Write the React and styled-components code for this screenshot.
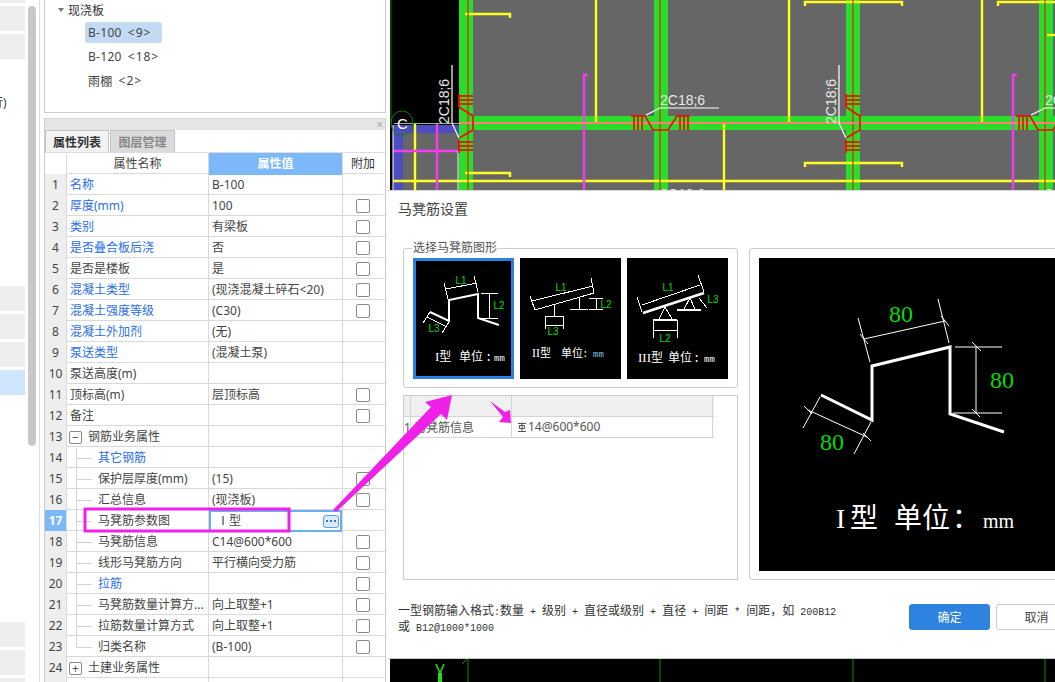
import React from "react";
import styled, { createGlobalStyle } from "styled-components";

const GlobalStyle = createGlobalStyle`
  html, body { margin: 0; padding: 0; background: #fff; }
  body { width: 1055px; height: 682px; overflow: hidden; font-family: "Noto Sans", "Noto Sans CJK SC", sans-serif; }
  * { box-sizing: border-box; }
`;

const Page = styled.div`
  position: relative;
  display: flex;
  width: 1055px;
  height: 682px;
  overflow: hidden;
  background: #fff;
  color: #333;
  font-size: 12px;
`;

/* left rail */
const Rail = styled.div`
  display: flex;
  flex: none;
  width: 40px;
  gap: 3px;
  border-right: 1px solid #ddd;
`;
const RailItems = styled.div`
  display: flex;
  flex-direction: column;
  width: 25px;
  margin-top: -22px;
  overflow: hidden;
`;
const RailItem = styled.div`
  flex: none;
  height: 25px;
  margin-bottom: 3px;
  background: ${(p) => (p.$active ? "#d0e6ff" : "#eeeeee")};
`;
const RailGap = styled.div`
  flex: none;
  height: ${(p) => p.$h}px;
  margin-top: -3px;
`;
const RailLabel = styled.div`
  margin: 37px 0 0 -9px;
  color: #444;
  font-size: 12px;
  line-height: 14px;
  white-space: nowrap;
`;
const RailScroll = styled.div`
  flex: none;
  width: 8px;
  height: 440px;
  margin-top: 6px;
  border-radius: 4px;
  background: #c8c8c8;
`;

/* middle column */
const Side = styled.div`
  display: flex;
  flex-direction: column;
  flex: none;
  width: 342px;
  margin-left: 4px;
`;
const TreePanel = styled.div`
  flex: none;
  height: 114px;
  padding: 0 0 0 13px;
  margin-top: -1px;
  border: 1px solid #ccc;
`;
const TreeHead = styled.div`
  display: flex;
  align-items: center;
  gap: 4px;
  height: 20px;
  font-size: 12px;
`;
const Caret = styled.span`
  width: 0;
  height: 0;
  border-left: 3px solid transparent;
  border-right: 3px solid transparent;
  border-top: 4px solid #777;
`;
const TreeList = styled.div`
  display: flex;
  flex-direction: column;
  gap: 3px;
  margin: 2px 0 0 27px;
`;
const TreeItem = styled.div`
  display: flex;
  align-items: center;
  gap: 6px;
  width: 77px;
  height: 21px;
  padding-left: 3px;
  border-radius: 3px;
  background: ${(p) => (p.$selected ? "#c3daf2" : "transparent")};
  font-size: 12px;
  letter-spacing: 0.3px;
  color: #444;
  white-space: nowrap;
`;
const Count = styled.span`
  letter-spacing: 1px;
`;
const PropPanel = styled.div`
  display: flex;
  flex-direction: column;
  flex: 1;
  min-height: 0;
  margin-top: 5px;
  border-right: 1px solid #ccc;
  border-left: 1px solid #ccc;
`;
const PanelBar = styled.div`
  display: flex;
  align-items: center;
  justify-content: flex-end;
  flex: none;
  height: 12px;
  padding-right: 2px;
  background: #e6e6e6;
  border-top: 1px solid #d4d4d4;
  color: #a8a8a8;
  font-size: 12px;
  line-height: 12px;
`;
const Tabs = styled.div`
  display: flex;
  flex: none;
  gap: 1px;
  height: 23px;
  border-bottom: 1px solid #ddd;
`;
const Tab = styled.div`
  display: flex;
  align-items: center;
  justify-content: center;
  width: ${(p) => (p.$active ? "64px" : "65px")};
  background: ${(p) => (p.$active ? "#f2f2f2" : "#dcdcdc")};
  border: 1px solid #c4c4c4;
  border-bottom: none;
  color: ${(p) => (p.$active ? "#333" : "#888")};
  font-size: 12px;
  font-weight: 700;
`;
const Row = styled.div`
  display: grid;
  grid-template-columns: 22px 142px 134px 41px;
  flex: none;
  height: 21px;
  border-bottom: 1px solid #d9d9d9;
  line-height: 22px;
`;
const NumCell = styled.div`
  text-align: center;
  font-size: 12px;
  border-right: 1px solid #d9d9d9;
  background: ${(p) => (p.$active ? "#7db9f8" : p.$blank ? "#fff" : "#eeeeee")};
  color: ${(p) => (p.$active ? "#fff" : "#444")};
  font-weight: ${(p) => (p.$active ? 700 : 400)};
`;
const NameCell = styled.div`
  display: flex;
  align-items: center;
  justify-content: ${(p) => (p.$center ? "center" : "flex-start")};
  padding-left: ${(p) => (p.$center ? 0 : 3)}px;
  border-right: 1px solid #d9d9d9;
  color: ${(p) => (p.$blue ? "#2a6ee8" : "#444")};
  white-space: nowrap;
  overflow: hidden;
`;
const ValueCell = styled.div`
  display: flex;
  align-items: center;
  justify-content: space-between;
  padding: 0 3px 0 3px;
  border-right: 1px solid #d9d9d9;
  white-space: nowrap;
  color: #444;
  ${(p) => p.$head && "justify-content: center; background: #7db9f8; color: #fff; font-weight: 700;"}
  ${(p) => p.$editing && "box-shadow: inset 0 0 0 2px #6ab0f0; padding-left: 8px;"}
`;
const AddCell = styled.div`
  display: flex;
  align-items: center;
  justify-content: center;
  padding-right: 1px;
`;
const Check = styled.span`
  display: block;
  width: 14px;
  height: 14px;
  border: 1px solid #8a8a8a;
  border-radius: 2px;
  background: #fff;
`;
const ToggleBox = styled.span`
  display: flex;
  align-items: center;
  justify-content: center;
  flex: none;
  width: 13px;
  height: 13px;
  margin: 0 6px 0 -1px;
  border: 1px solid #888;
  border-radius: 2px;
  color: #555;
  font-size: 12px;
  line-height: 11px;
`;
const Branch = styled.span`
  position: relative;
  flex: none;
  width: 22px;
  height: 21px;
  margin-left: 6px;
  &::before {
    content: "";
    position: absolute;
    left: 0;
    top: 0;
    width: 1px;
    height: ${(p) => (p.$last ? "10px" : "21px")};
    background: #d4d4d4;
  }
  &::after {
    content: "";
    position: absolute;
    left: 0;
    top: 10px;
    width: 16px;
    height: 1px;
    background: #d4d4d4;
  }
`;
const MoreButton = styled.span`
  display: flex;
  align-items: center;
  justify-content: center;
  gap: 2px;
  width: 16px;
  height: 13px;
  border: 1px solid #5aa0e8;
  border-radius: 3px;
  background: #dceafb;
  i {
    width: 2px;
    height: 2px;
    background: #2a78d8;
  }
`;

/* canvas */
const CadArea = styled.svg`
  display: block;
  flex: none;
  margin-left: 4px;
  width: 665px;
  height: 682px;
  background: #000;
`;

/* dialog */
const Dialog = styled.div`
  position: absolute;
  left: 388px;
  top: 190px;
  display: flex;
  flex-direction: column;
  width: 700px;
  height: 469px;
  padding: 10px 10px 0 10px;
  background: #fff;
  border-bottom: 1px solid #ccc;
  border-top: 1px solid #ddd;
`;
const DialogTitle = styled.div`
  height: 47px;
  color: #444;
  font-size: 14px;
  line-height: 16px;
`;
const DialogBody = styled.div`
  display: flex;
  gap: 11px;
  height: 332px;
  margin-left: 5px;
`;
const LeftPane = styled.div`
  display: flex;
  flex-direction: column;
  gap: 7px;
  width: 335px;
`;
const GroupBox = styled.div`
  position: relative;
  height: 140px;
  padding: 9px 9px 0 9px;
  border: 1px solid #ccc;
  border-radius: 3px;
  display: flex;
  gap: 6px;
`;
const Legend = styled.span`
  position: absolute;
  left: 8px;
  top: -8px;
  padding: 0 1px;
  background: #fff;
  color: #555;
  font-size: 12px;
  line-height: 14px;
`;
const Thumb = styled.svg`
  display: block;
  width: 101px;
  height: 121px;
  background: #000;
  outline: ${(p) => (p.$active ? "3px solid #2d7fe0" : "none")};
  outline-offset: -3px;
`;
const InfoTable = styled.div`
  flex: 1;
  border: 1px solid #ccc;
`;
const InfoRow = styled.div`
  display: grid;
  grid-template-columns: 7px 101px 201px;
  width: 310px;
  height: 21px;
  border-bottom: 1px solid #d4d4d4;
  background: ${(p) => (p.$head ? "#f0f0f0" : "#fff")};
  line-height: 22px;
  color: #555;
`;
const InfoCell = styled.div`
  padding-left: ${(p) => p.$pad || 0}px;
  border-right: 1px solid #d4d4d4;
  white-space: nowrap;
  overflow: hidden;
`;
const RebarValue = styled(InfoCell)`
  display: flex;
  align-items: center;
  gap: 1px;
  padding-left: 5px;
`;
const PreviewBox = styled.div`
  flex: none;
  width: 329px;
  padding: 9px;
  border: 1px solid #ccc;
  border-radius: 3px;
`;
const Preview = styled.svg`
  display: block;
  width: 309px;
  height: 313px;
  background: #000;
`;
const Footer = styled.div`
  display: flex;
  align-items: flex-start;
  justify-content: space-between;
  margin-top: 24px;
`;
const Hint = styled.div`
  width: 445px;
  color: #333;
  font-family: "Liberation Mono", "Noto Sans CJK SC", monospace;
  font-size: 10px;
  line-height: 14px;
`;
const Cn = styled.span`
  font-family: "Noto Sans CJK SC", sans-serif;
  font-size: 12px;
  line-height: 1;
`;
const Buttons = styled.div`
  display: flex;
  gap: 6px;
  margin-right: 1px;
`;
const Btn = styled.div`
  display: flex;
  align-items: center;
  justify-content: center;
  width: 81px;
  height: 26px;
  border-radius: 3px;
  font-size: 12px;
  background: ${(p) => (p.$primary ? "#2e82e0" : "#fff")};
  color: ${(p) => (p.$primary ? "#fff" : "#444")};
  border: 1px solid ${(p) => (p.$primary ? "#2e82e0" : "#ccc")};
`;

const Annotation = styled.svg`
  position: absolute;
  left: 0;
  top: 0;
  width: 1055px;
  height: 682px;
  pointer-events: none;
`;

/* name, value, blue, checkbox, tree/branch kind */
const rows = [
  ["名称", "B-100", 1, 0],
  ["厚度(mm)", "100", 1, 1],
  ["类别", "有梁板", 1, 1],
  ["是否叠合板后浇", "否", 1, 1],
  ["是否是楼板", "是", 0, 1],
  ["混凝土类型", "(现浇混凝土碎石<20)", 1, 1],
  ["混凝土强度等级", "(C30)", 1, 1],
  ["混凝土外加剂", "(无)", 1, 0],
  ["泵送类型", "(混凝土泵)", 1, 0],
  ["泵送高度(m)", "", 0, 0],
  ["顶标高(m)", "层顶标高", 0, 1],
  ["备注", "", 0, 1],
  ["钢筋业务属性", "", 0, 0, "minus"],
  ["其它钢筋", "", 1, 0, "branch"],
  ["保护层厚度(mm)", "(15)", 0, 1, "branch"],
  ["汇总信息", "(现浇板)", 0, 1, "branch"],
  ["马凳筋参数图", "Ⅰ型", 0, 0, "branch", true],
  ["马凳筋信息", "C14@600*600", 0, 1, "branch"],
  ["线形马凳筋方向", "平行横向受力筋", 0, 1, "branch"],
  ["拉筋", "", 1, 1, "branch"],
  ["马凳筋数量计算方...", "向上取整+1", 0, 1, "branch"],
  ["拉筋数量计算方式", "向上取整+1", 0, 1, "branch"],
  ["归类名称", "(B-100)", 0, 1, "last"],
  ["土建业务属性", "", 0, 0, "plus"],
  ["", "", 0, 0],
];

const VRebar = ({ x }) => (
  <g stroke="#f00" fill="none" strokeWidth="1.6">
    {[96, 100, 104, 142, 146, 150].map((y) => (
      <line key={y} x1={x - 1} y1={y} x2={x + 14} y2={y} />
    ))}
    <line x1={x} y1={94} x2={x} y2={107} />
    <line x1={x} y1={140} x2={x} y2={153} />
    <polyline points={`${x},107 ${x + 14},116 ${x + 14},130 ${x},138`} />
  </g>
);

const HRebar = ({ x }) => (
  <g stroke="#f00" fill="none" strokeWidth="1.6">
    {[3, 7, 11, 49, 53, 57].map((d) => (
      <line key={d} x1={x + d} y1={116} x2={x + d} y2={130} />
    ))}
    <polyline points={`${x},116 ${x + 14},116 ${x + 22},130 ${x + 37},130 ${x + 46},116 ${x + 59},116`} />
  </g>
);

const VLabel = ({ x }) => (
  <g>
    <polyline points={`${x},65 ${x},123 ${x + 7},138`} stroke="#fff" strokeWidth="1.2" fill="none" />
    <text
      transform={`translate(${x - 3} 124) rotate(-90)`}
      fill="#e8e8e8"
      fontFamily="Liberation Sans"
      fontSize="14"
    >
      2C18;6
    </text>
  </g>
);

const HLabel = ({ x }) => (
  <g>
    <polyline points={`${x + 15},115 ${x + 29},108 ${x + 88},108`} stroke="#fff" strokeWidth="1.2" fill="none" />
    <text x={x + 29} y={105} fill="#e8e8e8" fontFamily="Liberation Sans" fontSize="14">
      2C18;6
    </text>
    <text x={x + 29} y={199} fill="#e8e8e8" fontFamily="Liberation Sans" fontSize="14">
      2C18;6
    </text>
  </g>
);

const CadDrawing = () => (
  <CadArea viewBox="390 0 665 682">
    <rect x="473" y="0" width="590" height="116" fill="#666" />
    <rect x="473" y="130" width="590" height="62" fill="#666" />
    <rect x="403" y="133" width="56" height="60" fill="#666" />
    <rect x="393" y="125" width="66" height="8" fill="#4d4dc0" />
    <rect x="393" y="125" width="10" height="68" fill="#4d4dc0" />
    {[459, 654, 846, 1039].map((x) => (
      <rect key={x} x={x} y="0" width="14" height="192" fill="#2bdd2b" />
    ))}
    <rect x="459" y="116" width="600" height="14" fill="#2bdd2b" />
    <g stroke="#ff2" strokeWidth="2.4" fill="none">
      <line x1="596" y1="0" x2="596" y2="122" />
      <line x1="789" y1="0" x2="789" y2="122" />
      <line x1="982" y1="0" x2="982" y2="122" />
      <line x1="724" y1="124" x2="724" y2="192" />
      <line x1="415" y1="124" x2="415" y2="192" />
      <line x1="393" y1="181" x2="1055" y2="181" />
      <line x1="1047" y1="35" x2="1055" y2="35" />
      <polyline points="465,14 510,14 510,18" />
      <polyline points="465,173 510,173 510,177" />
      <polyline points="805,6 805,2 902,2 902,6" />
      <polyline points="805,167 805,163 902,163 902,167" />
      <polyline points="998,6 998,2 1060,2" />
    </g>
    <g stroke="#f23cf2" strokeWidth="2.4" fill="none">
      <polyline points="588,75 584,75 584,192" />
      <polyline points="1017,75 1013,75 1013,192" />
      <line x1="437" y1="124" x2="437" y2="192" />
      <line x1="393" y1="151" x2="458" y2="151" />
    </g>
    <g stroke="#f00" strokeWidth="1">
      {[468, 660, 853, 1045].map((x) => (
        <line key={x} x1={x} y1="0" x2={x} y2="192" />
      ))}
    </g>
    <line x1="459" y1="123" x2="1055" y2="123" stroke="#ff8070" strokeWidth="2" />
    <line x1="394" y1="123.5" x2="459" y2="123.5" stroke="#8fbf8f" />
    <line x1="391" y1="0" x2="391" y2="124" stroke="#0c7c0c" />
    <line x1="393" y1="125" x2="393" y2="192" stroke="#fff" />
    <line x1="458" y1="150" x2="458" y2="192" stroke="#eee" />
    <ellipse cx="402" cy="123" rx="11" ry="12" fill="none" stroke="#0c7c0c" />
    <text x="397" y="129" fill="#fff" fontFamily="Liberation Sans" fontSize="15">C</text>
    <VRebar x={459} />
    <VRebar x={846} />
    <HRebar x={631} />
    <HRebar x={1016} />
    <VLabel x={452} />
    <VLabel x={839} />
    <HLabel x={631} />
    <HLabel x={1016} />
    {[468, 660, 853, 1045].map((x) => (
      <line key={x} x1={x} y1="650" x2={x} y2="682" stroke="#0a8a0a" />
    ))}
    <line x1="462" y1="664" x2="467" y2="659" stroke="#0a8a0a" />
    <g stroke="#1fdc1f" fill="none" strokeWidth="1.6">
      <polyline points="436,664 440,673 444,664" />
      <line x1="440" y1="673" x2="440" y2="682" strokeWidth="4" />
    </g>
  </CadArea>
);

const Lines = ({ list, width = 1, crisp = true }) => (
  <g stroke="#fff" strokeWidth={width} fill="none" shapeRendering={crisp ? "crispEdges" : "auto"}>
    {list.map((l, i) => (
      <line key={i} x1={l[0]} y1={l[1]} x2={l[2]} y2={l[3]} />
    ))}
  </g>
);

const Greens = ({ list, size, family = "Liberation Sans" }) => (
  <g fill="#00dc00" fontFamily={family} fontSize={size} textAnchor="middle">
    {list.map((t, i) => (
      <text key={i} x={t[0]} y={t[1]}>
        {t[2]}
      </text>
    ))}
  </g>
);

/* caption pieces sit at fixed places in the small drawings */
const Caption = ({ y, type, at, size = 12, unit = "#fff" }) => (
  <g fill="#fff" fontFamily="Liberation Mono, Noto Sans CJK SC" fontSize={size}>
    <text x={at[0]} y={y}>
      <tspan fontFamily="Liberation Serif" fontSize={size + 1}>{type}</tspan>型
    </text>
    <text x={at[1]} y={y}>单位</text>
    <text x={at[2]} y={y}>:</text>
    <text x={at[3]} y={y} fontSize="9" fill={unit}>mm</text>
  </g>
);

const ThumbOne = () => (
  <Thumb viewBox="0 0 101 121" $active>
    <polyline points="17,54 36,63 36,42 65,36 65,60 86,67" fill="none" stroke="#fff" strokeWidth="2" />
    <Lines
      list={[
        [31, 25, 35, 41],
        [61, 18, 65, 34],
        [33, 31, 64, 25],
        [68, 35, 85, 35],
        [68, 60, 85, 60],
        [76, 35, 76, 60],
        [10, 65, 17, 54],
        [29, 75, 36, 64],
        [14, 59, 34, 69],
      ]}
    />
    <Greens size={10} list={[[48, 26, "L1"], [86, 51, "L2"], [21, 74, "L3"]]} />
    <Caption y={103} type="I" at={[22, 46, 72, 81]} />
  </Thumb>
);

const ThumbTwo = () => (
  <Thumb viewBox="0 0 101 121">
    <Lines
      list={[
        [12, 43, 73, 28],
        [15, 52, 74, 35],
        [10, 38, 15, 52],
        [71, 20, 74, 35],
        [34, 47, 34, 58],
        [25, 58, 43, 58],
        [25, 58, 25, 71],
        [43, 58, 43, 71],
        [25, 67, 43, 67],
        [59, 40, 59, 51],
        [50, 51, 68, 51],
        [69, 40, 83, 40],
        [69, 51, 83, 51],
        [76, 40, 76, 51],
      ]}
    />
    <Greens size={10} list={[[41, 33, "L1"], [86, 50, "L2"], [33, 77, "L3"]]} />
    <Caption y={99} type="II" size={11} at={[12, 41, 62, 73]} unit="#7cc4f0" />
  </Thumb>
);

const ThumbThree = () => (
  <Thumb viewBox="0 0 101 121">
    <line x1="16" y1="55" x2="77" y2="35" stroke="#fff" strokeWidth="2.5" />
    <Lines
      list={[
        [15, 47, 73, 27],
        [10, 39, 15, 54],
        [71, 17, 77, 34],
        [38, 49, 32, 61],
        [38, 49, 45, 61],
        [26, 62, 26, 80],
        [50, 62, 50, 80],
        [26, 72, 50, 72],
        [63, 40, 57, 51],
        [63, 40, 68, 51],
        [72, 40, 80, 50],
      ]}
    />
    <Lines width={2} list={[[26, 62, 50, 62], [50, 52, 74, 52]]} />
    <Greens size={10} list={[[41, 33, "L1"], [38, 84, "L2"], [86, 45, "L3"]]} />
    <Caption y={104} type="III" at={[11, 41, 66, 77]} />
  </Thumb>
);

const PreviewDrawing = () => (
  <Preview viewBox="0 0 309 313">
    <polyline points="62,137 113,162 113,108 191,89 191,156 245,174" fill="none" stroke="#fff" strokeWidth="3" />
    <Lines
      crisp={false}
      list={[
        [99, 60, 111, 104],
        [179, 41, 190, 85],
        [105, 81, 186, 63],
        [196, 89, 243, 89],
        [194, 155, 243, 155],
        [217, 89, 217, 155],
        [213, 84, 222, 93],
        [213, 151, 221, 159],
        [44, 170, 61, 139],
        [95, 196, 112, 164],
        [49, 152, 108, 179],
        [101, 76, 109, 86],
        [182, 58, 190, 68],
        [45, 148, 53, 156],
        [104, 175, 112, 183],
      ]}
    />
    <Greens size={24} family="Liberation Serif" list={[[142, 64, "80"], [243, 130, "80"], [73, 192, "80"]]} />
    <g fill="#fff" fontFamily="Liberation Serif, Noto Sans CJK SC" fontSize="28">
      <text x="77" y="270">I</text>
      <text x="91" y="270">型</text>
      <text x="135" y="270">单位</text>
      <text x="193" y="270">：</text>
      <text x="224" y="270" fontSize="20">mm</text>
    </g>
  </Preview>
);

const RebarGlyph = () => (
  <svg width="10" height="11" viewBox="0 0 10 11" fill="none" stroke="#555">
    <path d="M1 1.5h8M2.5 3.5h5v3h-5zM5 0.5v9.5M1 9.5h8" />
  </svg>
);

const PropertyRow = ({ index, row }) => {
  const [name, value, blue, check, kind, editing] = row;
  const blank = index === 25 && !name;
  return (
    <Row>
      <NumCell $active={editing}>{blank ? "" : index}</NumCell>
      <NameCell $blue={!!blue}>
        {kind === "minus" && <ToggleBox>−</ToggleBox>}
        {kind === "plus" && <ToggleBox>+</ToggleBox>}
        {(kind === "branch" || kind === "last") && <Branch $last={kind === "last"} />}
        {name}
      </NameCell>
      <ValueCell $editing={editing}>
        {value}
        {editing && (
          <MoreButton>
            <i />
            <i />
            <i />
          </MoreButton>
        )}
      </ValueCell>
      <AddCell>{check ? <Check /> : null}</AddCell>
    </Row>
  );
};

export default function App() {
  return (
    <Page>
      <GlobalStyle />
      <Rail>
        <RailItems>
          <RailItem />
          <RailItem />
          <RailItem />
          <RailGap $h={227}>
            <RailLabel>行)</RailLabel>
          </RailGap>
          <RailItem />
          <RailItem />
          <RailItem />
          <RailItem $active />
          <RailGap $h={227} />
          <RailItem />
          <RailItem />
          <RailItem />
        </RailItems>
        <RailScroll />
      </Rail>
      <Side>
        <TreePanel>
          <TreeHead>
            <Caret />
            现浇板
          </TreeHead>
          <TreeList>
            <TreeItem $selected>
              <span>B-100</span>
              <Count>&lt;9&gt;</Count>
            </TreeItem>
            <TreeItem>
              <span>B-120</span>
              <Count>&lt;18&gt;</Count>
            </TreeItem>
            <TreeItem>
              <span>雨棚</span>
              <Count>&lt;2&gt;</Count>
            </TreeItem>
          </TreeList>
        </TreePanel>
        <PropPanel>
          <PanelBar>×</PanelBar>
          <Tabs>
            <Tab $active>属性列表</Tab>
            <Tab>图层管理</Tab>
          </Tabs>
          <Row>
            <NumCell $blank />
            <NameCell $center>属性名称</NameCell>
            <ValueCell $head>属性值</ValueCell>
            <AddCell>附加</AddCell>
          </Row>
          {rows.map((row, i) => (
            <PropertyRow key={i} index={i + 1} row={row} />
          ))}
        </PropPanel>
      </Side>
      <CadDrawing />
      <Dialog>
        <DialogTitle>马凳筋设置</DialogTitle>
        <DialogBody>
          <LeftPane>
            <GroupBox>
              <Legend>选择马凳筋图形</Legend>
              <ThumbOne />
              <ThumbTwo />
              <ThumbThree />
            </GroupBox>
            <InfoTable>
              <InfoRow $head>
                <InfoCell />
                <InfoCell />
                <InfoCell />
              </InfoRow>
              <InfoRow>
                <InfoCell>1</InfoCell>
                <InfoCell $pad={3}>马凳筋信息</InfoCell>
                <RebarValue>
                  <RebarGlyph />
                  14@600*600
                </RebarValue>
              </InfoRow>
            </InfoTable>
          </LeftPane>
          <PreviewBox>
            <PreviewDrawing />
          </PreviewBox>
        </DialogBody>
        <Footer>
          <Hint>
            <Cn>一型钢筋输入格式</Cn>:<Cn>数量</Cn> + <Cn>级别</Cn> + <Cn>直径或级别</Cn> + <Cn>直径</Cn> + <Cn>间距</Cn> * <Cn>间距，如</Cn> 200B12
            <br />
            <Cn>或</Cn> B12@1000*1000
          </Hint>
          <Buttons>
            <Btn $primary>确定</Btn>
            <Btn>取消</Btn>
          </Buttons>
        </Footer>
      </Dialog>
      <Annotation viewBox="0 0 1055 682">
        <rect x="85" y="509" width="204" height="22" fill="none" stroke="#f020e8" strokeWidth="3" />
        <polygon points="333,510 431,407 425,402 452,395 447,420 441,414 336,512" fill="#f020e8" />
        <polygon points="490,401 505,412 510,410 511,423 499,422 503,417" fill="#f020e8" />
      </Annotation>
    </Page>
  );
}
